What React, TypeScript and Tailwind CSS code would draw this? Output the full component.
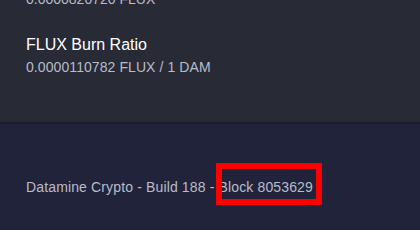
import React from "react";

export default function App() {
  return (
    <div className="w-[420px] h-[230px] overflow-hidden flex flex-col bg-[#21233a] font-['Liberation_Sans',Arial,sans-serif]">
      <div className="h-[124px] shrink-0 bg-[#282a36] px-[26px] flex flex-col border-b-2 border-[#1c1d29]">
        <div className="text-[14px] leading-[16px] text-[#b9bcc9] -mt-[9px]">0.0000820720 FLUX</div>
        <div className="mt-[28px] text-[16px] leading-[20px] text-white">FLUX Burn Ratio</div>
        <div className="mt-[4px] text-[14px] leading-[16px] tracking-[0.08px] text-[#b9bcc9]">0.0000110782 FLUX / 1 DAM</div>
      </div>
      <div className="px-[26px] pt-[51px]">
        <div className="relative inline-block text-[14px] leading-[16px] tracking-[0.14px] text-[#b9bcc9]">
          Datamine Crypto - Build 188 - Block 8053629
          <div className="absolute left-[190px] -top-[16px] w-[106px] h-[42px] border-[6px] border-[#ff0000]" />
        </div>
      </div>
    </div>
  );
}
